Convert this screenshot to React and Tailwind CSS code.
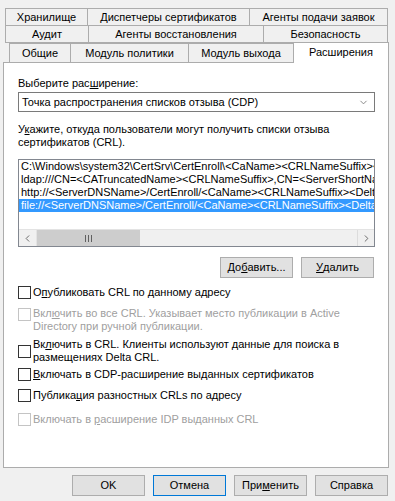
import { ChevronDown, ChevronLeft, ChevronRight } from "lucide-react";

const FONT = { fontFamily: '"Liberation Sans", Arial, sans-serif' };

// Tabs laid out row by row, widths taken from the dialog
const ROW1 = [
  { label: "Хранилище", w: "w-[83px]" },
  { label: "Диспетчеры сертификатов", w: "w-[163px]" },
  { label: "Агенты подачи заявок", w: "w-[139px]" },
];
const ROW2 = [
  { label: "Аудит", w: "w-[84px]" },
  { label: "Агенты восстановления", w: "w-[176px]" },
  { label: "Безопасность", w: "w-[125px]" },
];
const ROW3 = [
  { label: "Общие", w: "w-[62px]" },
  { label: "Модуль политики", w: "w-[119px]" },
  { label: "Модуль выхода", w: "w-[106px]" },
];

const CDP_LINES = [
  "C:\\Windows\\system32\\CertSrv\\CertEnroll\\<CaName><CRLNameSuffix><DeltaCRLAllowed>.crl",
  "ldap:///CN=<CATruncatedName><CRLNameSuffix>,CN=<ServerShortName>,CN=CDP,CN=Public Key Services",
  "http://<ServerDNSName>/CertEnroll/<CaName><CRLNameSuffix><DeltaCRLAllowed>.crl",
  "file://<ServerDNSName>/CertEnroll/<CaName><CRLNameSuffix><DeltaCRLAllowed>.crl",
];

function TabRow({ tabs, className }) {
  return (
    <div className={`flex ${className}`}>
      {tabs.map((t, i) => (
        <div
          key={t.label}
          className={`${t.w} h-[18px] border border-[#acacac] bg-[#f0f0f0] flex items-center justify-center leading-[13px] whitespace-nowrap ${i > 0 ? "-ml-px" : ""}`}
        >
          {t.label}
        </div>
      ))}
    </div>
  );
}

function Checkbox({ disabled, align = "items-center", className, children }) {
  return (
    <div className={`flex ${align} ${className}`}>
      <div
        className={`w-[13px] h-[13px] shrink-0 border bg-white ${disabled ? "border-[#c4c4c4]" : "border-[#333333]"} ${align === "items-start" ? "mt-[1px]" : ""}`}
      />
      <div className={`ml-[2px] leading-[13px] whitespace-nowrap ${disabled ? "text-[#a0a0a0]" : "text-black"}`}>
        {children}
      </div>
    </div>
  );
}

function Button({ children, focused, className }) {
  return (
    <div
      className={`w-[73px] h-[21px] flex items-center justify-center bg-[#e1e1e1] border whitespace-nowrap ${focused ? "border-[#0078d7]" : "border-[#adadad]"} leading-[13px] ${className || ""}`}
    >
      {children}
    </div>
  );
}

export default function App() {
  return (
    <div className="w-[395px] h-[501px] bg-[#f0f0f0] text-[11px] text-black overflow-hidden" style={FONT}>
      {/* tab strip */}
      <TabRow tabs={ROW1} className="pt-[8px] ml-[5px]" />
      <TabRow tabs={ROW2} className="-mt-px ml-[5px]" />
      <div className="flex items-end h-[19px] ml-[9px]">
        {ROW3.map((t, i) => (
          <div
            key={t.label}
            className={`${t.w} h-[19px] border border-b-0 border-[#acacac] bg-[#f0f0f0] flex items-center justify-center leading-[13px] whitespace-nowrap ${i > 0 ? "-ml-px" : ""}`}
          >
            {t.label}
          </div>
        ))}
        <div className="w-[96px] h-[21px] -ml-px -mb-px relative z-10 border border-b-0 border-[#acacac] bg-white flex justify-center pt-[3px] leading-[13px]">
          Расширения
        </div>
      </div>

      {/* page */}
      <div className="ml-[3px] w-[386px] h-[406px] border border-[#acacac] bg-white pl-[14px] pr-[13px]">
        <div className="mt-[14px] leading-[13px]">
          Выберите рас<u>ш</u>ирение:
        </div>
        <div className="mt-[2px] h-[20px] border border-[#7a7a7a] bg-white flex items-center pl-[3px] pr-[5px]">
          <span className="flex-1 leading-[13px]">Точка распространения списков отзыва (CDP)</span>
          <ChevronDown size={11} strokeWidth={2} className="text-[#808080]" />
        </div>

        <div className="mt-[11px] leading-[13px] whitespace-nowrap">
          У<u>к</u>ажите, откуда пользователи могут получить списки отзыва
          <br />
          сертификатов (CRL).
        </div>

        {/* CDP list */}
        <div className="mt-[10px] w-[357px] h-[88px] border border-[#828790] bg-white flex flex-col">
          <div className="flex-1 overflow-hidden">
            {CDP_LINES.map((line, i) => (
              <div
                key={line}
                className={`h-[13px] leading-[13px] pl-[2px] whitespace-nowrap overflow-hidden ${i === 3 ? "bg-[#3399ff] text-white" : ""}`}
              >
                {line}
              </div>
            ))}
          </div>
          <div className="h-[17px] flex bg-[#f0f0f0] border-t border-[#e3e3e3]">
            <div className="w-[18px] flex items-center justify-center bg-[#f0f0f0] border-r border-[#e3e3e3]">
              <ChevronLeft size={11} strokeWidth={2} className="text-[#606060]" />
            </div>
            <div className="w-[103px] bg-[#cdcdcd] flex items-center justify-center gap-[2px]">
              <div className="w-px h-[7px] bg-[#606060]" />
              <div className="w-px h-[7px] bg-[#606060]" />
              <div className="w-px h-[7px] bg-[#606060]" />
            </div>
            <div className="flex-1" />
            <div className="w-[17px] flex items-center justify-center bg-[#f0f0f0] border-l border-[#dcdcdc]">
              <ChevronRight size={11} strokeWidth={2} className="text-[#606060]" />
            </div>
          </div>
        </div>

        <div className="mt-[10px] flex justify-end gap-[8px] pr-[1px]">
          <Button>
            До<u>б</u>авить...
          </Button>
          <Button>
            <u>У</u>далить
          </Button>
        </div>

        <Checkbox className="mt-[8px]">
          О<u>п</u>убликовать CRL по данному адресу
        </Checkbox>
        <Checkbox disabled align="items-start" className="mt-[8px]">
          Вкл<u>ю</u>чить во все CRL. Указывает место публикации в Active
          <br />
          Directory при ручной публикации.
        </Checkbox>
        <Checkbox className="mt-[5px]">
          Вк<u>л</u>ючить в CRL. Клиенты используют данные для поиска в
          <br />
          размещениях Delta CRL.
        </Checkbox>
        <Checkbox className="mt-[4px]">
          <u>В</u>ключать в CDP-расширение выданных сертификатов
        </Checkbox>
        <Checkbox className="mt-[8px]">
          Публика<u>ц</u>ия разностных CRLs по адресу
        </Checkbox>
        <Checkbox disabled className="mt-[11px]">
          Включать в <u>р</u>асширение IDP выданных CRL
        </Checkbox>
      </div>

      {/* dialog buttons */}
      <div className="mt-[7px] ml-[72px] flex gap-[8px]">
        <Button>OK</Button>
        <Button focused>Отмена</Button>
        <Button>
          При<u>м</u>енить
        </Button>
        <Button>Справка</Button>
      </div>
    </div>
  );
}
